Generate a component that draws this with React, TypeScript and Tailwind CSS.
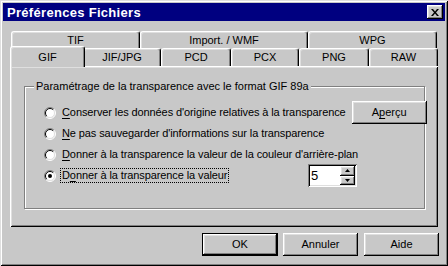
import React from "react";

const raised =
  "shadow-[inset_-1px_-1px_0_#000,inset_1px_1px_0_#fff,inset_-2px_-2px_0_#808080,inset_2px_2px_0_#dfdfdf]";

function Radio({ checked = false }: { checked?: boolean }) {
  return (
    <svg width="12" height="12" viewBox="0 0 12 12" className="shrink-0">
      <circle cx="6" cy="6" r="5" fill="#fff" />
      <path d="M2.1 9.9 A5.5 5.5 0 0 1 9.9 2.1" fill="none" stroke="#808080" strokeWidth="1" />
      <path d="M9.9 2.1 A5.5 5.5 0 0 1 2.1 9.9" fill="none" stroke="#fff" strokeWidth="1" />
      <path d="M2.8 9.2 A4.5 4.5 0 0 1 9.2 2.8" fill="none" stroke="#000" strokeWidth="1" />
      <path d="M9.2 2.8 A4.5 4.5 0 0 1 2.8 9.2" fill="none" stroke="#dfdfdf" strokeWidth="1" />
      {checked && <circle cx="6" cy="6" r="2" fill="#000" />}
    </svg>
  );
}

function Tab({ label, className, selected = false }: { label: string; className: string; selected?: boolean }) {
  return (
    <div
      className={`${className} ${
        selected ? "relative z-10 -mx-[2px] -mt-[2px] -mb-[1px] bg-[#c8c8c8]" : ""
      } flex items-center justify-center rounded-t-[3px] border-t border-l border-r border-t-white border-l-white border-r-black shadow-[inset_-1px_0_0_#808080,inset_1px_1px_0_#dfdfdf]`}
    >
      {label}
    </div>
  );
}

function Button({ children, className = "" }: { children: React.ReactNode; className?: string }) {
  return (
    <button className={`h-[23px] w-[75px] shrink-0 bg-[#c8c8c8] ${raised} ${className}`}>{children}</button>
  );
}

function Arrow({ up }: { up: boolean }) {
  return (
    <svg width="5" height="3" viewBox="0 0 5 3">
      <path d={up ? "M2.5 0 L5 3 L0 3 Z" : "M0 0 L5 0 L2.5 3 Z"} fill="#000" />
    </svg>
  );
}

export default function App() {
  const rows = [
    { pre: "", key: "C", post: "onserver les données d'origine relatives à la transparence" },
    { pre: "", key: "N", post: "e pas sauvegarder d'informations sur la transparence" },
    { pre: "", key: "D", post: "onner à la transparence la valeur de la couleur d'arrière-plan" },
    { pre: "D", key: "o", post: "nner à la transparence la valeur" },
  ];

  return (
    <div className="h-[266px] w-[448px] bg-[#c8c8c8] p-[3px] font-['Liberation_Sans',Arial,sans-serif] text-[11px] leading-[13px] text-black shadow-[inset_1px_1px_0_#dfdfdf,inset_-1px_-1px_0_#000,inset_2px_2px_0_#fff,inset_-2px_-2px_0_#808080]">
      {/* title bar */}
      <div className="flex h-[18px] items-center bg-[#000080] pl-[4px] pr-[2px]">
        <span className="flex-1 text-[13px] font-bold tracking-[0.3px] text-white">Préférences Fichiers</span>
        <div className={`flex h-[14px] w-[16px] items-center justify-center bg-[#c8c8c8] ${raised}`}>
          <svg width="8" height="7" viewBox="0 0 8 7">
            <path d="M0 0h2l2 2.5L6 0h2L5 3.5 8 7H6L4 4.5 2 7H0l3-3.5z" fill="#000" />
          </svg>
        </div>
      </div>

      <div className="px-[7px] pt-[10px]">
        {/* back row */}
        <div className="flex h-[17px] pl-[1px]">
          <Tab label="TIF" className="w-[129px]" />
          <Tab label="Import. / WMF" className="w-[168px]" />
          <Tab label="WPG" className="w-[129px]" />
        </div>
        {/* front row */}
        <div className="flex h-[18px] pl-[2px]">
          <Tab label="GIF" className="w-[75px]" selected />
          <Tab label="JIF/JPG" className="w-[78px]" />
          <Tab label="PCD" className="w-[70px]" />
          <Tab label="PCX" className="w-[68px]" />
          <Tab label="PNG" className="w-[70px]" />
          <Tab label="RAW" className="w-[69px]" />
        </div>

        {/* panel */}
        <div className="h-[161px] pl-[14px] pr-[13px] pt-[20px] shadow-[inset_1px_1px_0_#fff,inset_-1px_-1px_0_#000,inset_2px_2px_0_#dfdfdf,inset_-2px_-2px_0_#808080]">
          <div className="relative h-[123px] border border-[#808080] pl-[19px] pr-[1px] pt-[15px] shadow-[inset_1px_1px_0_#fff,1px_1px_0_#fff]">
            <span className="absolute -top-[7px] left-[9px] whitespace-nowrap bg-[#c8c8c8] px-[2px]">
              Paramétrage de la transparence avec le format GIF 89a
            </span>
            {rows.map((r, i) => (
              <div key={i} className="flex h-[21px] items-center gap-[4px]">
                <Radio checked={i === 3} />
                <span
                  className={`whitespace-nowrap border px-[1px] tracking-[-0.1px] ${
                    i === 3 ? "border-dotted border-black" : "border-transparent"
                  }`}
                >
                  {r.pre}
                  <span className="underline underline-offset-[2px]">{r.key}</span>
                  {r.post}
                </span>
                {i === 0 && (
                  <Button className="ml-auto h-[21px] w-[74px]">
                    A<span className="underline underline-offset-[2px]">p</span>erçu
                  </Button>
                )}
                {i === 3 && (
                  <div className="ml-auto mr-[66px] flex h-[23px] w-[49px] items-stretch bg-white p-[2px] shadow-[inset_1px_1px_0_#808080,inset_-1px_-1px_0_#fff,inset_2px_2px_0_#000,inset_-2px_-2px_0_#dfdfdf]">
                    <span className="flex-1 pl-[1px] text-[13px] leading-[19px]">5</span>
                    <div className="flex w-[15px] flex-col">
                      <div className={`flex flex-1 items-center justify-center bg-[#c8c8c8] ${raised}`}>
                        <Arrow up />
                      </div>
                      <div className={`flex flex-1 items-center justify-center bg-[#c8c8c8] ${raised}`}>
                        <Arrow up={false} />
                      </div>
                    </div>
                  </div>
                )}
              </div>
            ))}
          </div>
        </div>
      </div>

      {/* buttons */}
      <div className="mt-[6px] flex justify-end pr-[6px]">
        <Button className="mr-[5px] w-[76px] border border-black">OK</Button>
        <Button className="mr-[6px]">Annuler</Button>
        <Button>Aide</Button>
      </div>
    </div>
  );
}
